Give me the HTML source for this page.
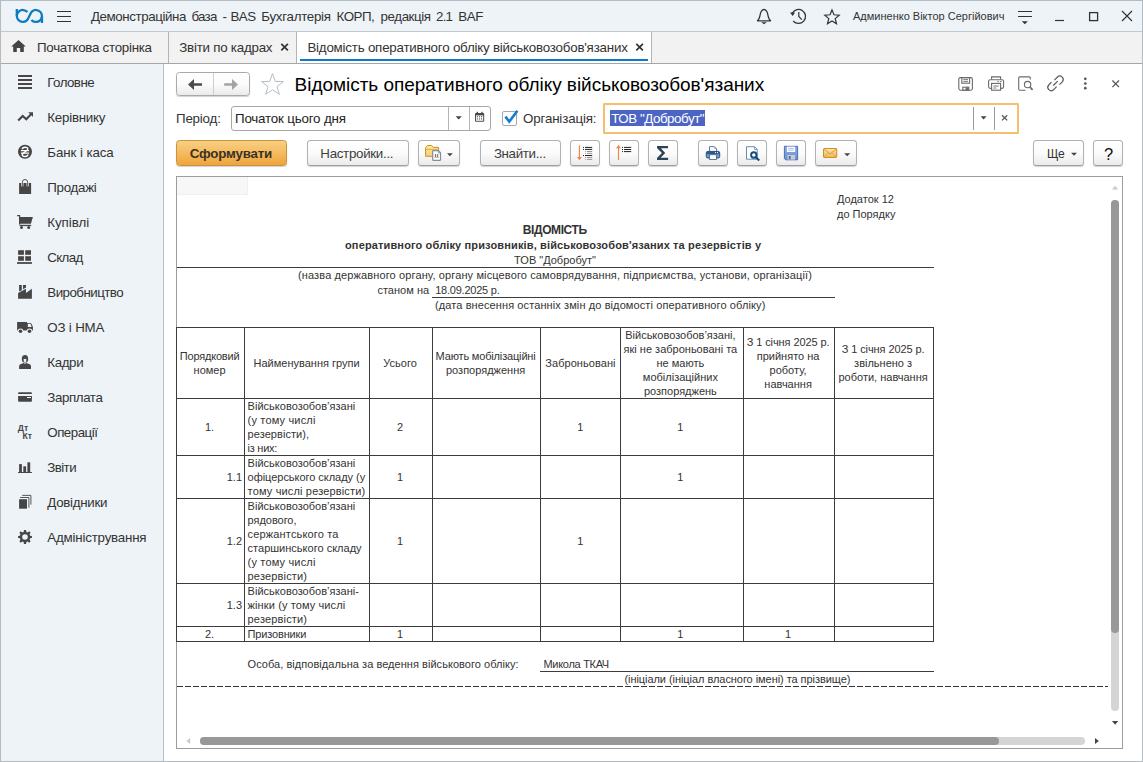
<!DOCTYPE html>
<html lang="uk">
<head>
<meta charset="utf-8">
<title>BAS</title>
<style>
html,body{margin:0;padding:0;}
body{width:1143px;height:762px;position:relative;overflow:hidden;background:#fff;font-family:"Liberation Sans",sans-serif;font-size:13px;color:#333;}
.a{position:absolute;}
.t{position:absolute;white-space:nowrap;line-height:16px;}
.r{position:absolute;white-space:nowrap;line-height:14px;font-size:11px;color:#333;}
.rc{position:absolute;white-space:nowrap;line-height:14px;font-size:11px;color:#333;text-align:center;}
.hl{position:absolute;height:1px;background:#3a3a3a;}
.vl{position:absolute;width:1px;background:#3a3a3a;}
.nav{position:absolute;left:47px;font-size:14px;color:#333;white-space:nowrap;line-height:16px;}
.btn{position:absolute;box-sizing:border-box;border:1px solid #b2b2b2;border-bottom-color:#9f9f9f;border-radius:3.5px;background:linear-gradient(#ffffff 0%,#fbfbfb 50%,#ebebeb 100%);box-shadow:0 1px 1px rgba(0,0,0,.18);}
.lbl{position:absolute;left:0;right:0;text-align:center;white-space:nowrap;font-size:13px;line-height:16px;color:#333;}
svg{position:absolute;overflow:visible;}
</style>
</head>
<body>
<div class="a" style="left:0px;top:0px;width:1143px;height:762px;background:#b4bcc1;"></div>
<div class="a" style="left:1px;top:1px;width:1141px;height:30px;background:#eef3f7;"></div>
<div class="a" style="left:1px;top:31px;width:1141px;height:1px;background:#c2c8cc;"></div>
<div class="a" style="left:1px;top:32px;width:1141px;height:31px;background:#f2f2f2;"></div>
<div class="a" style="left:1px;top:63px;width:1141px;height:1px;background:#a6a6a6;"></div>
<div class="a" style="left:1px;top:64px;width:162px;height:697px;background:#eef3f7;"></div>
<div class="a" style="left:163px;top:64px;width:1px;height:697px;background:#b7bcc0;"></div>
<div class="a" style="left:164px;top:64px;width:978px;height:697px;background:#ffffff;"></div>
<svg style="left:0;top:0" width="90" height="32" viewBox="0 0 90 32"><g fill="none" stroke="#0c7bc4" stroke-width="2.25"><path d="M27.4,12.1 A6,6 0 1 0 26.66,20.6 C28.96,18.67 29.8,13.33 32.1,11.4 A6,6 0 1 1 31.4,19.9"/><path d="M16.8,9 V16.2"/><path d="M42,15.8 V23"/></g><g stroke="#333" stroke-width="1.15"><path d="M57,11.5 H71 M57,16.5 H71 M57,21.5 H71"/></g></svg>
<div class="t" style="left:90.9px;top:8.50px;font-size:13.33px;letter-spacing:-0.406px;">Демонстраційна</div>
<div class="t" style="left:191.5px;top:8.50px;font-size:13.33px;letter-spacing:-0.775px;">база</div>
<div class="t" style="left:222.5px;top:8.50px;font-size:13.33px;letter-spacing:0.000px;">-</div>
<div class="t" style="left:230.5px;top:8.50px;font-size:13.33px;letter-spacing:-0.536px;">BAS</div>
<div class="t" style="left:261.3px;top:8.50px;font-size:13.33px;letter-spacing:-0.280px;">Бухгалтерія</div>
<div class="t" style="left:336.5px;top:8.50px;font-size:13.33px;letter-spacing:-0.489px;">КОРП,</div>
<div class="t" style="left:380.6px;top:8.50px;font-size:13.33px;letter-spacing:-0.425px;">редакція</div>
<div class="t" style="left:436px;top:8.50px;font-size:13.33px;letter-spacing:-0.766px;">2.1</div>
<div class="t" style="left:458.3px;top:8.50px;font-size:13.33px;letter-spacing:-0.361px;">BAF</div>
<svg style="left:750px;top:2px" width="100" height="28" viewBox="750 2 100 28"><g fill="none" stroke="#333" stroke-width="1.3" stroke-linejoin="round"><path d="M757.5,20.8 C760.5,18.5 759.8,13.5 761,11.8 C761.8,10.2 763,9.5 764,9.5 C765,9.5 766.2,10.2 767,11.8 C768.2,13.5 767.5,18.5 770.5,20.8 Z"/></g><path d="M761.2,22.3 H766.8 L764,24.2 Z" fill="#333"/><g fill="none" stroke="#333" stroke-width="1.3"><path d="M792.3,13.2 A7,7 0 1 1 793.2,21"/><path d="M798.8,12 V16.5 L801.8,19.6" stroke-width="1.2"/></g><path d="M790,12.4 L795,12.4 L792.6,15.9 Z" fill="#333"/><path d="M832,9.9 L834,14.8 L839.2,15.2 L835.2,18.6 L836.5,23.7 L832,20.9 L827.5,23.7 L828.8,18.6 L824.8,15.2 L830,14.8 Z" fill="none" stroke="#333" stroke-width="1.2" stroke-linejoin="miter"/></svg>
<div class="t" style="left:853px;top:8.00px;font-size:11px;">Админенко Віктор Сергійович</div>
<svg style="left:1010px;top:2px" width="130" height="28" viewBox="1010 2 130 28"><g stroke="#333" stroke-width="1.2" fill="none"><path d="M1018,11.5 H1032 M1018,16.5 H1032"/><path d="M1055,20.5 H1064"/><rect x="1089.6" y="12.6" width="8" height="8" stroke-width="1.3"/><path d="M1122,11 L1132,21 M1132,11 L1122,21" stroke-width="1.15"/></g><path d="M1021.8,21.3 H1027.8 L1024.8,24.2 Z" fill="#333"/></svg>
<div class="vl" style="left:168px;top:32px;height:31px;background:#b3b3b3;"></div>
<div class="a" style="left:297px;top:32px;width:354px;height:31px;background:#ffffff;"></div>
<div class="vl" style="left:296px;top:32px;height:31px;background:#b3b3b3;"></div>
<div class="vl" style="left:651px;top:32px;height:31px;background:#b3b3b3;"></div>
<div class="a" style="left:300px;top:59px;width:348px;height:2px;background:#0b7ac8;"></div>
<svg style="left:10px;top:38px" width="18" height="16" viewBox="10 38 18 16"><path d="M18.5,40 L25.8,46.6 H23.8 V52 H20.2 V48 H16.8 V52 H13.2 V46.6 H11.2 Z" fill="#444"/></svg>
<div class="t" style="left:37px;top:39.50px;font-size:13.33px;letter-spacing:-0.271px;">Початкова сторінка</div>
<div class="t" style="left:179.3px;top:39.50px;font-size:13.33px;letter-spacing:-0.235px;">Звіти по кадрах</div>
<div class="t" style="left:307.4px;top:39.50px;font-size:13.33px;letter-spacing:-0.206px;">Відомість оперативного обліку військовозобов'язаних</div>
<svg style="left:278px;top:40px" width="14" height="14" viewBox="278 40 14 14"><path d="M281.3,43.8 L287.9,50.4 M287.9,43.8 L281.3,50.4" stroke="#333" stroke-width="1.7" fill="none"/></svg>
<svg style="left:633px;top:40px" width="14" height="14" viewBox="633 40 14 14"><path d="M636.3,43.8 L642.9,50.4 M642.9,43.8 L636.3,50.4" stroke="#333" stroke-width="1.7" fill="none"/></svg>
<div class="t" style="left:47.3px;top:74.50px;font-size:13.33px;letter-spacing:-0.557px;">Головне</div>
<div class="t" style="left:47.3px;top:109.50px;font-size:13.33px;letter-spacing:-0.237px;">Керівнику</div>
<div class="t" style="left:47.3px;top:144.50px;font-size:13.33px;letter-spacing:-0.084px;">Банк і каса</div>
<div class="t" style="left:47.3px;top:179.50px;font-size:13.33px;letter-spacing:-0.281px;">Продажі</div>
<div class="t" style="left:47.3px;top:214.50px;font-size:13.33px;letter-spacing:-0.054px;">Купівлі</div>
<div class="t" style="left:47.3px;top:249.50px;font-size:13.33px;letter-spacing:-0.670px;">Склад</div>
<div class="t" style="left:47.3px;top:284.50px;font-size:13.33px;letter-spacing:-0.529px;">Виробництво</div>
<div class="t" style="left:47.3px;top:319.50px;font-size:13.33px;letter-spacing:-0.187px;">ОЗ і НМА</div>
<div class="t" style="left:47.3px;top:354.50px;font-size:13.33px;letter-spacing:-0.378px;">Кадри</div>
<div class="t" style="left:47.3px;top:389.50px;font-size:13.33px;letter-spacing:-0.408px;">Зарплата</div>
<div class="t" style="left:47.3px;top:424.50px;font-size:13.33px;letter-spacing:-0.504px;">Операції</div>
<div class="t" style="left:47.3px;top:459.50px;font-size:13.33px;letter-spacing:-0.589px;">Звіти</div>
<div class="t" style="left:47.3px;top:494.50px;font-size:13.33px;letter-spacing:-0.287px;">Довідники</div>
<div class="t" style="left:47.3px;top:529.50px;font-size:13.33px;letter-spacing:-0.200px;">Адміністрування</div>
<svg style="left:0;top:64px" width="60" height="520" viewBox="0 64 60 520"><rect x="18" y="75" width="14" height="2" fill="#464646"/><rect x="18" y="79" width="14" height="2" fill="#464646"/><rect x="18" y="83" width="14" height="2" fill="#464646"/><rect x="18" y="87" width="14" height="2" fill="#464646"/><path d="M18.2,120.6 L22.7,116 L26.3,119.3 L31.6,113.6" fill="none" stroke="#464646" stroke-width="2.1" stroke-linejoin="miter"/><path d="M28.2,112.2 H33 V117 Z" fill="#464646"/><circle cx="25" cy="151.8" r="7" fill="#464646"/><g fill="none" stroke="#fff"><path d="M20.9,150.6 H29.1 M20.9,153 H29.1" stroke-width="1.25"/><path d="M22.3,149.3 C22.2,146.7 27.7,146.4 27.8,148.9 C27.9,151 22.2,152.7 22.2,154.8 C22.3,157.3 27.7,157.1 27.8,154.5" stroke-width="1.45"/></g><rect x="19.1" y="183" width="12" height="11" fill="#464646"/><path d="M22.3,186.3 V182.4 A2.7,2.9 0 0 1 27.7,182.4 V186.3" fill="none" stroke="#fff" stroke-width="2.2"/><path d="M22.3,186 V182.4 A2.7,2.9 0 0 1 27.7,182.4 V186" fill="none" stroke="#464646" stroke-width="1"/><path d="M17.1,215.6 H19.6 V224.6" fill="none" stroke="#464646" stroke-width="1.2"/><path d="M19.6,217.1 H32.9 L30.9,223.8 H19.6 Z" fill="#464646"/><rect x="19.6" y="224.8" width="11.6" height="1.3" fill="#464646"/><circle cx="21.5" cy="227.5" r="1.5" fill="#464646"/><circle cx="28.7" cy="227.5" r="1.5" fill="#464646"/><rect x="18.1" y="250.2" width="5.8" height="4.6" fill="#464646"/><rect x="25.2" y="250.2" width="5.8" height="4.6" fill="#464646"/><rect x="18.1" y="256.2" width="5.8" height="4.6" fill="#464646"/><rect x="25.2" y="256.2" width="5.8" height="4.6" fill="#464646"/><rect x="17.1" y="262.1" width="14.8" height="1.8" fill="#464646"/><path d="M18.1,298.7 V293 L26,288.8 V292.9 L31.9,288.8 V298.7 Z" fill="#464646"/><path d="M19.1,285.1 H21.8 V290.2 L19.1,291.6 Z M23,285.1 H26 V287.6 L23,289.2 Z" fill="#464646"/><path d="M17.1,322.1 H27 V323 H31 L32.9,326.8 V330.4 H17.1 Z" fill="#464646"/><path d="M27.8,323.8 H30.6 L31.6,326.9 H27.8 Z" fill="#eef3f7"/><circle cx="20.5" cy="331.3" r="2.9" fill="#eef3f7"/><circle cx="20.5" cy="331.3" r="1.8" fill="#464646"/><circle cx="29.5" cy="331.3" r="2.9" fill="#eef3f7"/><circle cx="29.5" cy="331.3" r="1.8" fill="#464646"/><ellipse cx="25" cy="358.8" rx="3.2" ry="3.9" fill="#464646"/><path d="M23.5,359.2 Q25,358.5 26.5,359.2 Q26.5,362 25,362.6 Q23.5,362 23.5,359.2 Z" fill="#e9eef2"/><path d="M19.1,368.9 V366.2 Q19.1,364.6 21,364 L23.6,363 Q25,364.4 26.4,363 L29,364 Q31,364.6 31,366.2 V368.9 Q31,369 30.2,369 H19.9 Q19.1,369 19.1,368.9 Z" fill="#464646"/><path d="M18.1,394 V393.2 Q18.1,392.3 19,392.3 H31 Q31.9,392.3 31.9,393.2 V394 Z" fill="#464646"/><path d="M18.1,395.9 H31.9 V401 Q31.9,401.8 31,401.8 H19 Q18.1,401.8 18.1,401 Z" fill="#464646"/><rect x="27" y="397" width="4" height="1" fill="#fff"/><text x="17.8" y="431" font-family="Liberation Sans" font-weight="bold" font-size="8.6" fill="#464646">Дт</text><text x="22.6" y="438.9" font-family="Liberation Sans" font-weight="bold" font-size="8.6" fill="#464646">Кт</text><rect x="19.1" y="464.1" width="2.8" height="8" fill="#464646"/><rect x="23.3" y="466.3" width="2.8" height="6" fill="#464646"/><rect x="27.4" y="462.3" width="2.8" height="10" fill="#464646"/><rect x="18.1" y="472" width="13.8" height="1" fill="#464646"/><rect x="19.1" y="499.2" width="7.9" height="9.5" fill="#464646"/><path d="M20.1,497.5 H28.9 V507.7 M22.2,495.4 H30.9 V504.6" fill="none" stroke="#464646" stroke-width="0.9"/><path fill-rule="evenodd" d="M23.95,530.08 L26.05,530.08 L26.36,531.88 L27.66,532.41 L29.15,531.37 L30.63,532.85 L29.59,534.34 L30.12,535.64 L31.92,535.95 L31.92,538.05 L30.12,538.36 L29.59,539.66 L30.63,541.15 L29.15,542.63 L27.66,541.59 L26.36,542.12 L26.05,543.92 L23.95,543.92 L23.64,542.12 L22.34,541.59 L20.85,542.63 L19.37,541.15 L20.41,539.66 L19.88,538.36 L18.08,538.05 L18.08,535.95 L19.88,535.64 L20.41,534.34 L19.37,532.85 L20.85,531.37 L22.34,532.41 L23.64,531.88 Z M27.8,537 A2.8,2.8 0 1 0 22.2,537 A2.8,2.8 0 1 0 27.8,537 Z" fill="#464646"/></svg>
<div class="btn" style="left:176px;top:72px;width:74px;height:24px;border-color:#a9a9a9;"></div>
<div class="vl" style="left:213px;top:73px;height:22px;background:#cfcfcf;"></div>
<svg style="left:180px;top:74px" width="70" height="20" viewBox="180 74 70 20"><path d="M188,84.5 L194,79 V83.2 H202 V85.8 H194 V90 Z" fill="#4a4a4a"/><path d="M238,84.5 L232,79 V83.2 H224.2 V85.8 H232 V90 Z" fill="#a3a3a3"/></svg>
<svg style="left:258px;top:70px" width="30" height="28" viewBox="258 70 30 28"><path d="M272.5,73.6 L275.3,81.4 L283.4,81.6 L277,86.6 L279.3,94.3 L272.5,89.7 L265.7,94.3 L268,86.6 L261.6,81.6 L269.7,81.4 Z" fill="none" stroke="#b4bdc5" stroke-width="1"/></svg>
<div class="t" style="left:294.6px;top:76.50px;font-size:19px;color:#000;letter-spacing:-0.037px;">Відомість оперативного обліку військовозобов'язаних</div>
<svg style="left:950px;top:70px" width="180" height="26" viewBox="950 70 180 26"><g fill="none" stroke="#6b6b6b" stroke-width="1.1"><rect x="958.8" y="77.6" width="13.6" height="12.6" rx="1.6"/><rect x="961.8" y="77.6" width="7.8" height="5.6"/><path d="M963.3,79.6 H968 M963.3,81.4 H968" stroke-width="0.9"/><rect x="962.8" y="87.2" width="6" height="3"/></g><rect x="965.6" y="87.2" width="3.2" height="3" fill="#6b6b6b"/><g fill="none" stroke="#6b6b6b" stroke-width="1.1"><path d="M991.6,79.4 V76.9 H1000.6 V79.4"/><path d="M991.6,88.4 H990.2 Q988.6,88.4 988.6,86.8 V81.3 Q988.6,79.7 990.2,79.7 H1002 Q1003.6,79.7 1003.6,81.3 V86.8 Q1003.6,88.4 1002,88.4 H1000.6"/><rect x="991.6" y="83.4" width="9" height="6.8" fill="#fff"/><path d="M993.4,86 H998.8 M993.4,88 H996.4 M997.4,81.6 H999 M1000,81.6 H1001.6" stroke-width="0.9"/></g><g fill="none" stroke="#6b6b6b" stroke-width="1.1"><path d="M1030.3,79.5 V78 Q1030.3,76.9 1029.2,76.9 H1019.8 Q1018.7,76.9 1018.7,78 V89.1 Q1018.7,90.2 1019.8,90.2 H1025.5"/><circle cx="1027.6" cy="84.6" r="3.2"/><path d="M1030,87.2 L1032.6,89.8" stroke-width="1.8"/></g><g fill="none" stroke="#5a5a5a" stroke-width="1.2"><path d="M1054.4,80.1 L1057.5,77 A3.4,3.4 0 0 1 1062.3,81.8 L1059.5,84.6"/><path d="M1056.6,86.7 L1053.5,89.8 A3.4,3.4 0 0 1 1048.7,85 L1051.5,82.2"/><path d="M1053.3,85.5 L1057.7,81.1"/></g><circle cx="1085.3" cy="78.8" r="1.35" fill="#555"/><circle cx="1085.3" cy="83.5" r="1.35" fill="#555"/><circle cx="1085.3" cy="88.2" r="1.35" fill="#555"/><path d="M1112.4,80.5 L1119,87.1 M1119,80.5 L1112.4,87.1" stroke="#555" stroke-width="1.25" fill="none"/></svg>
<div class="t" style="left:176px;top:110.50px;font-size:13.33px;letter-spacing:-0.188px;">Період:</div>
<div class="a" style="left:231px;top:106px;width:260px;height:25px;box-sizing:border-box;border:1px solid #a8a8a8;border-radius:3px;background:#fff;"></div>
<div class="vl" style="left:448px;top:107px;height:23px;background:#b5b5b5;"></div>
<div class="vl" style="left:469px;top:107px;height:23px;background:#b5b5b5;"></div>
<div class="t" style="left:235px;top:110.50px;font-size:13.33px;color:#222;letter-spacing:-0.175px;">Початок цього дня</div>
<svg style="left:452px;top:108px" width="40" height="20" viewBox="452 108 40 20"><path d="M455.6,116.2 H461.8 L458.7,119.4 Z" fill="#444"/><g fill="#4a4a4a"><rect x="475" y="113" width="9.2" height="8.8" rx="1"/><rect x="476.6" y="111.8" width="1.3" height="2"/><rect x="481.3" y="111.8" width="1.3" height="2"/></g><rect x="476" y="115.4" width="7.2" height="5.4" fill="#fff"/><g fill="#555"><rect x="478.9" y="116.2" width="1.2" height="1.1"/><rect x="481" y="116.2" width="1.2" height="1.1"/><rect x="476.8" y="118.4" width="1.2" height="1.1"/><rect x="478.9" y="118.4" width="1.2" height="1.1"/><rect x="481" y="118.4" width="1.2" height="1.1"/><rect x="476.8" y="116.2" width="1.2" height="1.1"/></g></svg>
<div class="a" style="left:502px;top:111px;width:15px;height:15px;box-sizing:border-box;border:1px solid #a9a9a9;border-radius:2px;background:#fff;"></div>
<svg style="left:500px;top:106px" width="22" height="22" viewBox="500 106 22 22"><path d="M505.4,116.6 L509.3,121.6 L517.4,110.8" fill="none" stroke="#1081d0" stroke-width="2.6"/></svg>
<div class="t" style="left:523px;top:110.50px;font-size:13.33px;letter-spacing:-0.15px;">Організація:</div>
<div class="a" style="left:603px;top:103px;width:416px;height:31px;box-sizing:border-box;border:2px solid #f7bf6b;border-radius:1px;background:#fff;"></div>
<div class="a" style="left:610px;top:110px;width:95px;height:16px;background:#4c64c3;"></div>
<div class="t" style="left:611.2px;top:110.50px;font-size:13.33px;color:#fff;letter-spacing:-0.440px;">ТОВ "Добробут"</div>
<div class="vl" style="left:973px;top:107px;height:23px;background:#9a9a9a;"></div>
<div class="vl" style="left:994px;top:107px;height:23px;background:#9a9a9a;"></div>
<svg style="left:976px;top:108px" width="40" height="20" viewBox="976 108 40 20"><path d="M980.6,116.2 H986.6 L983.6,119.4 Z" fill="#444"/><path d="M1002,115.2 L1007.2,120.4 M1007.2,115.2 L1002,120.4" stroke="#555" stroke-width="1.3" fill="none"/></svg>
<div class="btn" style="left:176px;top:140px;width:111px;height:26px;border-color:#c9943b;background:linear-gradient(#f9cf84 0%,#f4b95a 55%,#eea43e 100%);"></div>
<div class="btn" style="left:307px;top:140px;width:102px;height:26px;"></div>
<div class="btn" style="left:418px;top:140px;width:42px;height:26px;"></div>
<div class="btn" style="left:480px;top:140px;width:81px;height:26px;"></div>
<div class="btn" style="left:570px;top:140px;width:30px;height:26px;"></div>
<div class="btn" style="left:609px;top:140px;width:30px;height:26px;"></div>
<div class="btn" style="left:648px;top:140px;width:30px;height:26px;"></div>
<div class="btn" style="left:698px;top:140px;width:30px;height:26px;"></div>
<div class="btn" style="left:737px;top:140px;width:30px;height:26px;"></div>
<div class="btn" style="left:776px;top:140px;width:30px;height:26px;"></div>
<div class="btn" style="left:815px;top:140px;width:42px;height:26px;"></div>
<div class="btn" style="left:1033px;top:140px;width:51px;height:26px;"><div class="lbl" style="top:4.5px;left:13.3px;right:auto;letter-spacing:-0.3px;transform:scaleX(.93);transform-origin:left;">Ще</div></div>
<div class="btn" style="left:1093px;top:140px;width:30px;height:26px;"><div class="lbl" style="top:4.7px;left:1px;font-size:16.5px;color:#111;">?</div></div>
<div class="t" style="left:189.7px;top:145.50px;font-size:13.33px;font-weight:bold;color:#3a3226;z-index:3;letter-spacing:-0.189px;">Сформувати</div>
<div class="t" style="left:320.3px;top:145.50px;font-size:13.33px;z-index:3;color:#3d3d3d;letter-spacing:-0.297px;">Настройки...</div>
<div class="t" style="left:493.9px;top:145.50px;font-size:13.33px;z-index:3;color:#3d3d3d;letter-spacing:-0.342px;">Знайти...</div>
<svg style="left:400px;top:140px" width="700" height="26" viewBox="400 140 700 26"><defs><linearGradient id="gf" x1="0" y1="0" x2="0" y2="1"><stop offset="0" stop-color="#fcec96"/><stop offset="1" stop-color="#f2cf78"/></linearGradient><linearGradient id="ge" x1="0" y1="0" x2="0" y2="1"><stop offset="0" stop-color="#fde7b0"/><stop offset="1" stop-color="#f2b552"/></linearGradient><linearGradient id="gs" x1="0" y1="0" x2="0" y2="1"><stop offset="0" stop-color="#8aabe4"/><stop offset="1" stop-color="#6a8fd4"/></linearGradient></defs><path d="M425.6,156.3 V147.4 L427.6,145.5 H431.6 L433.2,147.3 H438.6 V156.3 Z" fill="url(#gf)" stroke="#c9902f" stroke-width="1" stroke-linejoin="round"/><path d="M426,149.3 H438.4" stroke="#d9a646" stroke-width="0.9"/><path d="M432.7,151.4 Q432.7,150.7 433.4,150.7 H438.4 L440.5,152.8 V159.7 Q440.5,160.4 439.8,160.4 H433.4 Q432.7,160.4 432.7,159.7 Z" fill="#fff" stroke="#7c8ea0" stroke-width="1.2"/><path d="M438.3,150.9 V153 H440.4" fill="none" stroke="#7c8ea0" stroke-width="0.8"/><rect x="434.9" y="154.1" width="1.3" height="3" fill="#ee3a3a"/><rect x="437" y="154.1" width="1.3" height="3" fill="#3cbb52"/><path d="M434.2,157.5 H439" stroke="#9a9aa6" stroke-width="0.6"/><path d="M447,153.2 H452.8 L449.9,156.2 Z" fill="#444"/><path d="M579.4,145.2 V158" stroke="#ef8445" stroke-width="1.1"/><path d="M577,157 H581.9 L579.4,160.2 Z" fill="#ef8445"/><g stroke="#222" stroke-width="1"><path d="M583,147.4 H584 M585,147.4 H592.2 M583,149.4 H584 M585,149.4 H592.2 M583,155.5 H584 M585,155.5 H592.2"/></g><g stroke="#8a8a8a" stroke-width="0.9"><path d="M585.2,151.5 H586 M587,151.5 H592.2 M585.2,153.4 H586 M587,153.4 H592.2 M585.2,157.5 H586 M587,157.5 H592.2 M585.2,159.4 H586 M587,159.4 H592.2"/></g><path d="M618.5,147 V160" stroke="#ef8445" stroke-width="1.1"/><path d="M616,148.2 H621 L618.5,145 Z" fill="#ef8445"/><g stroke="#222" stroke-width="1"><path d="M622,147.4 H623 M624,147.4 H631.2 M622,149.5 H623 M624,149.5 H631.2 M622,151.6 H623 M624,151.6 H631.2"/></g><path d="M657,146 H668 V148.3 H660.9 L665.2,152.9 L660.6,157.7 H668.1 V160 H657 V158.1 L661.9,152.9 L657,147.9 Z" fill="#2f4356"/><path d="M709.5,151.4 V146.6 H714.3 L716.6,148.9 V151.4" fill="#fff" stroke="#56718e" stroke-width="0.9"/><path d="M714.3,146.6 V148.9 H716.6 Z" fill="#8aa0b8"/><rect x="706.3" y="151.4" width="13.4" height="6.6" rx="1.5" fill="#6f98c9" stroke="#1f4e7e" stroke-width="1"/><rect x="706.9" y="151.9" width="12.2" height="1.9" fill="#2d5a8d"/><rect x="715" y="152.1" width="1" height="1" fill="#fff"/><rect x="717" y="152.1" width="1" height="1" fill="#fff"/><path d="M708.2,153.9 H717.8" stroke="#1f4e7e" stroke-width="0.8"/><rect x="709.6" y="154.7" width="6.8" height="4.8" fill="#fff" stroke="#4f6f8f" stroke-width="0.9"/><path d="M746.5,146.7 H754.6 L757.2,149.3 V159.2 H746.5 Z" fill="#fff" stroke="#5a7da5" stroke-width="0.9"/><path d="M754.4,146.9 V149.5 H757" fill="none" stroke="#5a7da5" stroke-width="0.7"/><circle cx="753.8" cy="155" r="2.7" fill="#fff" stroke="#0f4c81" stroke-width="1.9"/><path d="M756,157.3 L759.2,160.5" stroke="#0f4c81" stroke-width="2.1"/><path d="M784.4,146.3 H797.6 V159.8 H785.6 L784.4,158.6 Z" fill="url(#gs)" stroke="#4068b0" stroke-width="0.9"/><rect x="786.9" y="146.6" width="8.2" height="5.4" fill="#fff"/><path d="M788.2,148.4 H793.8 M788.2,150.2 H793.8" stroke="#9ab0d8" stroke-width="0.8"/><rect x="787.4" y="155" width="7.6" height="4.6" fill="#c6cdd2"/><rect x="788.8" y="156" width="1.8" height="3.2" fill="#4a6aa8"/><rect x="823.5" y="148.5" width="13.2" height="9" rx="1.2" fill="url(#ge)" stroke="#cf9028" stroke-width="1.1"/><path d="M824.2,149.2 L830.1,154 L836,149.2" fill="none" stroke="#d39a34" stroke-width="1"/><path d="M824.2,157 L828.4,152.8 M836,157 L831.8,152.8" stroke="#dca545" stroke-width="0.8"/><path d="M844.2,153.2 H850.2 L847.2,156.2 Z" fill="#444"/><path d="M1071,152.8 H1077 L1074,155.8 Z" fill="#444"/></svg>
<div class="a" style="left:176px;top:176px;width:947px;height:573px;box-sizing:border-box;border:1px solid #9c9c9c;background:#fff;"></div>
<div class="a" style="left:177px;top:177px;width:71px;height:18px;background:#f0f0f0;"></div>
<div class="a" style="left:177px;top:177px;width:70px;height:17px;background:#f7f7f7;"></div>
<div class="r" style="left:837px;top:192.00px;font-size:11px;">Додаток 12</div>
<div class="r" style="left:837px;top:207.00px;font-size:11px;">до Порядку</div>
<div class="rc" style="left:454.8px;width:199.99999999999994px;top:223.00px;font-size:12px;font-weight:bold;letter-spacing:-0.406px;">ВІДОМІСТЬ</div>
<div class="rc" style="left:345px;width:416px;top:238.00px;font-size:11px;font-weight:bold;letter-spacing:0.14px;">оперативного обліку призовників, військовозобов'язаних та резервістів у</div>
<div class="rc" style="left:455px;width:200px;top:253.00px;font-size:11px;">ТОВ "Добробут"</div>
<div class="hl" style="left:177px;top:267px;width:757px;background:#3c3c3c;"></div>
<div class="rc" style="left:298px;width:514px;top:268.00px;font-size:11px;letter-spacing:0.125px;">(назва державного органу, органу місцевого самоврядування, підприємства, установи, організації)</div>
<div class="r" style="right:713.8px;top:283.00px;font-size:11px;letter-spacing:0.032px;">станом на</div>
<div class="r" style="left:435.2px;top:283.00px;font-size:11px;letter-spacing:-0.225px;">18.09.2025 р.</div>
<div class="hl" style="left:432px;top:297px;width:403px;background:#3c3c3c;"></div>
<div class="r" style="left:435px;top:298.00px;font-size:11px;letter-spacing:0.1px;">(дата внесення останніх змін до відомості оперативного обліку)</div>
<div class="hl" style="left:176px;top:327px;width:758px;background:#3c3c3c;"></div>
<div class="hl" style="left:176px;top:398px;width:758px;background:#3c3c3c;"></div>
<div class="hl" style="left:176px;top:455px;width:758px;background:#3c3c3c;"></div>
<div class="hl" style="left:176px;top:498px;width:758px;background:#3c3c3c;"></div>
<div class="hl" style="left:176px;top:583px;width:758px;background:#3c3c3c;"></div>
<div class="hl" style="left:176px;top:626px;width:758px;background:#3c3c3c;"></div>
<div class="hl" style="left:176px;top:641px;width:758px;background:#3c3c3c;"></div>
<div class="vl" style="left:176px;top:327px;height:315px;background:#3c3c3c;"></div>
<div class="vl" style="left:244px;top:327px;height:315px;background:#3c3c3c;"></div>
<div class="vl" style="left:369px;top:327px;height:315px;background:#3c3c3c;"></div>
<div class="vl" style="left:432px;top:327px;height:315px;background:#3c3c3c;"></div>
<div class="vl" style="left:540px;top:327px;height:315px;background:#3c3c3c;"></div>
<div class="vl" style="left:620px;top:327px;height:315px;background:#3c3c3c;"></div>
<div class="vl" style="left:743px;top:327px;height:315px;background:#3c3c3c;"></div>
<div class="vl" style="left:834px;top:327px;height:315px;background:#3c3c3c;"></div>
<div class="vl" style="left:933px;top:327px;height:315px;background:#3c3c3c;"></div>
<div class="rc" style="left:175.6px;width:68.0px;top:349.00px;font-size:11px;letter-spacing:-0.188px;">Порядковий</div>
<div class="rc" style="left:175.6px;width:68.0px;top:363.00px;font-size:11px;">номер</div>
<div class="rc" style="left:244.1px;width:125.00000000000003px;top:356.00px;font-size:11px;">Найменування групи</div>
<div class="rc" style="left:368.6px;width:63.0px;top:356.00px;font-size:11px;">Усього</div>
<div class="rc" style="left:431.6px;width:108.0px;top:349.00px;font-size:11px;letter-spacing:-0.166px;">Мають мобілізаційні</div>
<div class="rc" style="left:431.6px;width:108.0px;top:363.00px;font-size:11px;">розпорядження</div>
<div class="rc" style="left:540.4px;width:80.0px;top:356.00px;font-size:11px;letter-spacing:0.057px;">Заброньовані</div>
<div class="rc" style="left:618.9px;width:123.0px;top:328.00px;font-size:11px;">Військовозобов’язані,</div>
<div class="rc" style="left:618.9px;width:123.0px;top:342.00px;font-size:11px;">які не заброньовані та</div>
<div class="rc" style="left:618.9px;width:123.0px;top:356.00px;font-size:11px;">не мають</div>
<div class="rc" style="left:618.9px;width:123.0px;top:370.00px;font-size:11px;">мобілізаційних</div>
<div class="rc" style="left:618.9px;width:123.0px;top:384.00px;font-size:11px;">розпоряджень</div>
<div class="rc" style="left:742.6px;width:91.0px;top:335.00px;font-size:11px;letter-spacing:-0.084px;">З 1 січня 2025 р.</div>
<div class="rc" style="left:742.6px;width:91.0px;top:349.00px;font-size:11px;">прийнято на</div>
<div class="rc" style="left:742.6px;width:91.0px;top:363.00px;font-size:11px;">роботу,</div>
<div class="rc" style="left:742.6px;width:91.0px;top:377.00px;font-size:11px;">навчання</div>
<div class="rc" style="left:833.6px;width:99.0px;top:342.00px;font-size:11px;letter-spacing:-0.084px;">З 1 січня 2025 р.</div>
<div class="rc" style="left:833.6px;width:99.0px;top:356.00px;font-size:11px;">звільнено з</div>
<div class="rc" style="left:833.6px;width:99.0px;top:370.00px;font-size:11px;">роботи, навчання</div>
<div class="r" style="left:247.6px;top:399.00px;font-size:11px;letter-spacing:0.020px;">Військовозобов’язані</div>
<div class="r" style="left:247.6px;top:413.00px;font-size:11px;letter-spacing:0.172px;">(у тому числі</div>
<div class="r" style="left:247.6px;top:427.00px;font-size:11px;letter-spacing:0.060px;">резервісти),</div>
<div class="r" style="left:247.6px;top:441.00px;font-size:11px;letter-spacing:-0.255px;">із них:</div>
<div class="rc" style="left:175.6px;width:68.0px;top:420.00px;font-size:11px;">1.</div>
<div class="rc" style="left:368.6px;width:63.0px;top:420.00px;font-size:11px;">2</div>
<div class="rc" style="left:540.4px;width:80.0px;top:420.00px;font-size:11px;">1</div>
<div class="rc" style="left:618.9px;width:123.0px;top:420.00px;font-size:11px;">1</div>
<div class="r" style="left:247.6px;top:456.00px;font-size:11px;letter-spacing:0.020px;">Військовозобов’язані</div>
<div class="r" style="left:247.6px;top:470.00px;font-size:11px;letter-spacing:-0.037px;">офіцерського складу (у</div>
<div class="r" style="left:247.6px;top:484.00px;font-size:11px;letter-spacing:0.154px;">тому числі резервісти)</div>
<div class="r" style="right:901px;top:470.00px;font-size:11px;">1.1</div>
<div class="rc" style="left:368.6px;width:63.0px;top:470.00px;font-size:11px;">1</div>
<div class="rc" style="left:618.9px;width:123.0px;top:470.00px;font-size:11px;">1</div>
<div class="r" style="left:247.6px;top:499.00px;font-size:11px;letter-spacing:0.020px;">Військовозобов’язані</div>
<div class="r" style="left:247.6px;top:513.00px;font-size:11px;letter-spacing:-0.048px;">рядового,</div>
<div class="r" style="left:247.6px;top:527.00px;font-size:11px;letter-spacing:0.162px;">сержантського та</div>
<div class="r" style="left:247.6px;top:541.00px;font-size:11px;letter-spacing:0.009px;">старшинського складу</div>
<div class="r" style="left:247.6px;top:555.00px;font-size:11px;letter-spacing:0.172px;">(у тому числі</div>
<div class="r" style="left:247.6px;top:569.00px;font-size:11px;letter-spacing:0.160px;">резервісти)</div>
<div class="r" style="right:901px;top:534.00px;font-size:11px;">1.2</div>
<div class="rc" style="left:368.6px;width:63.0px;top:534.00px;font-size:11px;">1</div>
<div class="rc" style="left:540.4px;width:80.0px;top:534.00px;font-size:11px;">1</div>
<div class="r" style="left:247.6px;top:584.00px;font-size:11px;letter-spacing:0.017px;">Військовозобов’язані-</div>
<div class="r" style="left:247.6px;top:598.00px;font-size:11px;letter-spacing:0.110px;">жінки (у тому числі</div>
<div class="r" style="left:247.6px;top:612.00px;font-size:11px;letter-spacing:0.160px;">резервісти)</div>
<div class="r" style="right:901px;top:598.00px;font-size:11px;">1.3</div>
<div class="rc" style="left:175.6px;width:68.0px;top:627.00px;font-size:11px;">2.</div>
<div class="r" style="left:247.6px;top:627.00px;font-size:11px;letter-spacing:-0.159px;">Призовники</div>
<div class="rc" style="left:368.6px;width:63.0px;top:627.00px;font-size:11px;">1</div>
<div class="rc" style="left:618.9px;width:123.0px;top:627.00px;font-size:11px;">1</div>
<div class="rc" style="left:742.6px;width:91.0px;top:627.00px;font-size:11px;">1</div>
<div class="r" style="left:247.6px;top:657.00px;font-size:11px;letter-spacing:0.043px;">Особа, відповідальна за ведення військового обліку:</div>
<div class="r" style="left:543.5px;top:657.00px;font-size:11px;letter-spacing:-0.296px;">Микола ТКАЧ</div>
<div class="hl" style="left:540px;top:671px;width:394px;background:#3c3c3c;"></div>
<div class="r" style="left:624.4px;top:672.00px;font-size:11px;letter-spacing:-0.055px;">(ініціали (ініціал власного імені) та прізвище)</div>
<div class="a" style="left:177px;top:686px;width:931px;height:1px;background:repeating-linear-gradient(90deg,#333 0,#333 6.4px,transparent 6.4px,transparent 8px);"></div>
<div class="a" style="left:1111px;top:200px;width:8px;height:511px;border-radius:4px;background:#d5d5d5;"></div>
<div class="a" style="left:1111px;top:200px;width:8px;height:433px;border-radius:4px;background:#989898;"></div>
<div class="a" style="left:200px;top:737px;width:885px;height:8px;border-radius:4px;background:#d5d5d5;"></div>
<div class="a" style="left:200px;top:737px;width:799px;height:8px;border-radius:4px;background:#989898;"></div>
<svg style="left:176px;top:176px" width="947" height="573" viewBox="176 176 947 573"><path d="M1112,189.6 H1118.2 L1115.1,185.8 Z" fill="#c9c9c9"/><path d="M1112,721 H1118.2 L1115.1,724.8 Z" fill="#444"/><path d="M1095,738 V744 L1098.8,741 Z" fill="#444"/><path d="M190.2,738 V744 L186.4,741 Z" fill="#c9c9c9"/></svg>
</body>
</html>
